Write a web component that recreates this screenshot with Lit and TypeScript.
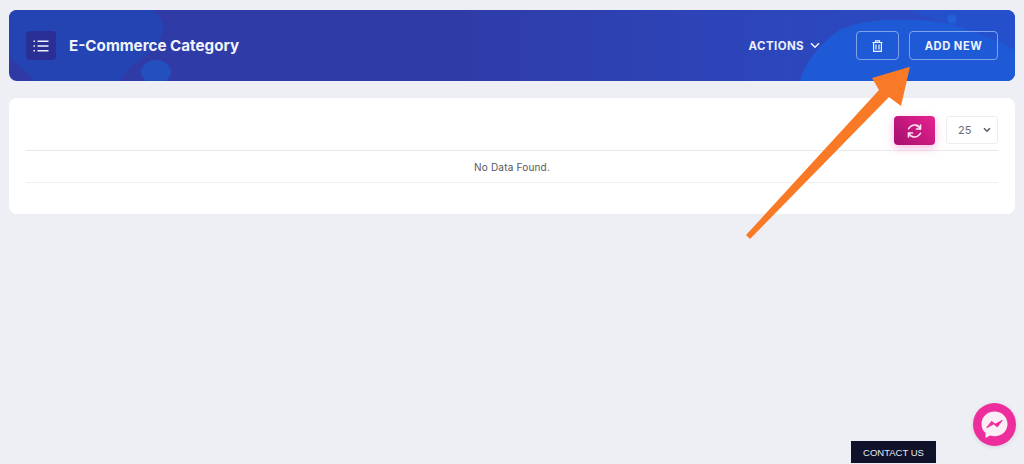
import { LitElement, html, css, svg } from "lit";
import { customElement } from "lit/decorators.js";

@customElement("app-root")
export class AppRoot extends LitElement {
  static styles = css`
    :host { display: block; width: 1024px; height: 464px; position: relative; overflow: hidden; background: #eeeff5; font-family: Inter, "Noto Sans", sans-serif; }
    .page { display: flex; flex-direction: column; gap: 17px; padding: 10px 9px 0; }
    .hero { position: relative; overflow: hidden; height: 71px; border-radius: 8px; background: linear-gradient(90deg, #2f3aa6 0%, #2f3ca8 45%, #2d44b8 70%, #2a4dc6 100%); display: flex; align-items: center; padding: 0 17px; box-sizing: border-box; }
    .bg { position: absolute; inset: 0; width: 100%; height: 100%; }
    .menu { position: relative; width: 30px; height: 29px; border-radius: 4px; background: #2a2f96; display: flex; align-items: center; justify-content: center; margin-right: 13px; }
    .title { position: relative; color: #f1f4fc; font-size: 15.2px; font-weight: 700; flex: 1; }
    .actions { position: relative; color: #eaf0fb; font-size: 11.5px; font-weight: 700; letter-spacing: .4px; display: flex; align-items: center; gap: 6px; margin-right: 36px; }
    .btn { position: relative; height: 29px; box-sizing: border-box; border: 1px solid #7fa4ec; border-radius: 4px; color: #eef3fc; display: flex; align-items: center; justify-content: center; font-size: 11.2px; font-weight: 700; letter-spacing: .5px; }
    .trash { width: 43px; margin-right: 10px; }
    .add { width: 89px; }
    .card { background: #fff; border-radius: 8px; height: 116px; padding: 0 17px; box-sizing: border-box; display: flex; flex-direction: column; }
    .tools { height: 53px; box-sizing: border-box; padding-top: 18px; border-bottom: 1px solid #e9e9ec; display: flex; justify-content: flex-end; gap: 11px; align-items: flex-start; }
    .refresh { width: 41px; height: 29px; border-radius: 4px; background: linear-gradient(45deg, #a40f6e 0%, #e8228f 100%); box-shadow: 0 3px 8px rgba(232,60,170,.35); display: flex; align-items: center; justify-content: center; }
    .select { width: 52px; height: 28px; box-sizing: border-box; border: 1px solid #eeeef1; border-radius: 3px; display: flex; align-items: center; justify-content: space-between; padding: 0 6px 0 11px; font-size: 11px; color: #666a72; }
    .row { height: 32px; border-bottom: 1px solid #f0f0f2; display: flex; align-items: center; justify-content: center; font-size: 10px; letter-spacing: .2px; color: #55575f; box-sizing: border-box; }
    .arrow { position: absolute; left: 0; top: 0; width: 1024px; height: 464px; pointer-events: none; }
    .contact { position: absolute; left: 851px; top: 441px; width: 85px; height: 22px; background: #10112a; color: #e6e8ee; font-family: "Liberation Sans", Arial, sans-serif; font-size: 9.5px; display: flex; align-items: center; justify-content: center; }
    .msgr { position: absolute; left: 973px; top: 403px; width: 43px; height: 43px; border-radius: 50%; background: #ee2d9c; display: flex; align-items: center; justify-content: center; box-shadow: 0 1px 4px rgba(0,0,0,.12); }
  `;

  render() {
    return html`
      <div class="page">
        <div class="hero">
          <svg class="bg" viewBox="0 0 1006 71" preserveAspectRatio="none">
            ${svg`<path d="M0 0H144C156 10 158 22 148 34C136 48 118 56 111 71H26C14 60 6 52 0 46Z" fill="#2444b4"/>
            <ellipse cx="147" cy="62" rx="15" ry="12" fill="#2350bc"/>
            <path d="M791 71C796 52 812 32 831 20C850 10 880 9 904 10C950 12 985 22 1006 30V71Z" fill="#1f5ad6"/>
            <path d="M900 0H1006V40C970 20 930 12 900 0Z" fill="#2450cc"/>
            <circle cx="943" cy="9" r="4.5" fill="#2460d8"/>`}
          </svg>
          <div class="menu">
            <svg width="16" height="12" viewBox="0 0 16 12" fill="none" stroke="#eef2fc" stroke-width="1.6">
              <path d="M4.5 1.2H15.5M4.5 6H15.5M4.5 10.8H15.5"/>
              <path d="M.5 1.2H2M.5 6H2M.5 10.8H2"/>
            </svg>
          </div>
          <div class="title">E-Commerce Category</div>
          <div class="actions">ACTIONS
            <svg width="10" height="7" viewBox="0 0 10 7" fill="none" stroke="#eaf0fb" stroke-width="1.6"><path d="M1 1.2L5 5.2L9 1.2"/></svg>
          </div>
          <div class="btn trash">
            <svg width="11" height="12" viewBox="0 0 11 12" fill="none" stroke="#eef3fc" stroke-width="1.2">
              <path d="M.5 2.5H10.5M3.5 2.5V.8H7.5V2.5M1.6 2.5V11.3H9.4V2.5M4 4.5V9.5M7 4.5V9.5"/>
            </svg>
          </div>
          <div class="btn add">ADD NEW</div>
        </div>
        <div class="card">
          <div class="tools">
            <div class="refresh">
              <svg width="17" height="16" viewBox="0 0 24 24" fill="none" stroke="#fbe6f3" stroke-width="2.4" stroke-linecap="round" stroke-linejoin="round">
                <path d="M21 3v6h-6"/><path d="M3 21v-6h6"/>
                <path d="M20.5 9A9 9 0 0 0 5.6 5.6L3 8.5"/><path d="M3.5 15a9 9 0 0 0 14.9 3.4L21 15.5"/>
              </svg>
            </div>
            <div class="select">25
              <svg width="8" height="6" viewBox="0 0 8 6" fill="none" stroke="#555a66" stroke-width="1.6"><path d="M1 1.2L4 4.2L7 1.2"/></svg>
            </div>
          </div>
          <div class="row">No Data Found.</div>
        </div>
      </div>
      <svg class="arrow" viewBox="0 0 1024 464">
        <polygon points="910,66.7 872,78 879,90 746,235 750,239 889,97 901,106" fill="#f97a26"/>
      </svg>
      <div class="contact">CONTACT US</div>
      <div class="msgr">
        <svg width="31" height="31" viewBox="0 0 31 31">
          <path d="M15.5 2.5C8 2.5 2.5 8 2.5 15C2.5 18.8 4 22 6.6 24.2V29L11 26.6C12.4 27 13.9 27.3 15.5 27.3C23 27.3 28.5 21.8 28.5 15C28.5 8 23 2.5 15.5 2.5Z" fill="#fbeef6"/>
          <path d="M7.8 18.6L12.6 12.4L16.4 15.2L23.2 11.4L18.4 17.8L14.6 15Z" fill="#ee2d9c" stroke="#ee2d9c" stroke-width="1" stroke-linejoin="round"/>
        </svg>
      </div>
    `;
  }
}
